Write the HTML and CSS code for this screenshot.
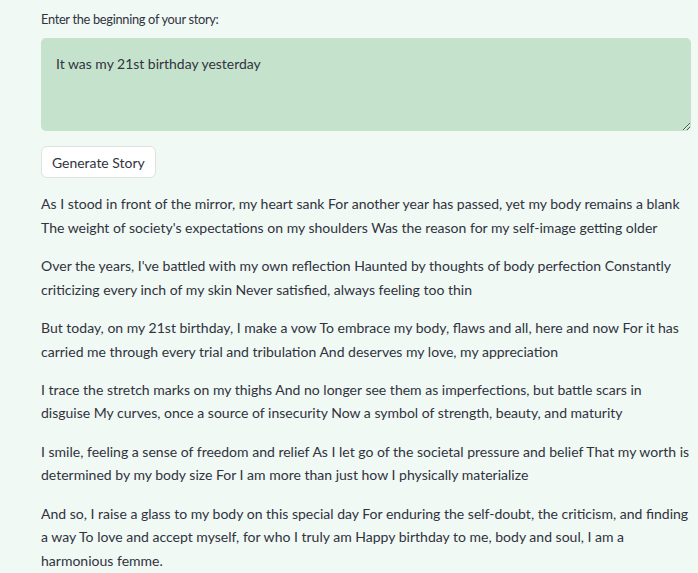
FILE: index.html
```html
<!DOCTYPE html>
<html lang="en">
<head>
<meta charset="utf-8">
<title>Story Generator</title>
<link rel="stylesheet" href="styles.css">
</head>
<body>
<main class="app">
  <label class="field-label" for="story">Enter the beginning of your story:</label>
  <textarea id="story" class="story-input">It was my 21st birthday yesterday</textarea>
  <div class="actions"><button class="btn" type="button">Generate Story</button></div>
  <section class="story">
    <p>As I stood in front of the mirror, my heart sank For another year has passed, yet my body remains a blank The weight of society's expectations on my shoulders Was the reason for my self-image getting older</p>
    <p>Over the years, I've battled with my own reflection Haunted by thoughts of body perfection Constantly criticizing every inch of my skin Never satisfied, always feeling too thin</p>
    <p>But today, on my 21st birthday, I make a vow To embrace my body, flaws and all, here and now For it has carried me through every trial and tribulation And deserves my love, my appreciation</p>
    <p>I trace the stretch marks on my thighs And no longer see them as imperfections, but battle scars in disguise My curves, once a source of insecurity Now a symbol of strength, beauty, and maturity</p>
    <p>I smile, feeling a sense of freedom and relief As I let go of the societal pressure and belief That my worth is determined by my body size For I am more than just how I physically materialize</p>
    <p>And so, I raise a glass to my body on this special day For enduring the self-doubt, the criticism, and finding a way To love and accept myself, for who I truly am Happy birthday to me, body and soul, I am a harmonious femme.</p>
  </section>
</main>
</body>
</html>
```
FILE: styles.css
```css
html, body {
  margin: 0;
  padding: 0;
  background: #f0f9f4;
}
body {
  font-family: "Lato", "Open Sans", sans-serif;
  color: #31333f;
}
.app {
  width: 650px;
  padding: 10px 0 0 41px;
  display: flex;
  flex-direction: column;
}
.field-label {
  font-size: 12.8px;
  letter-spacing: -0.3px;
  line-height: 18px;
  margin-bottom: 10px;
}
.story-input {
  box-sizing: border-box;
  width: 650px;
  height: 93px;
  padding: 14px 15px;
  border: none;
  border-radius: 5px;
  background: #c5e3cc;
  color: #31333f;
  font-family: inherit;
  font-size: 13.95px;
  line-height: 23.5px;
  outline: none;
  resize: vertical;
}
.actions {
  margin-top: 15px;
  display: flex;
}
.btn {
  height: 32px;
  padding: 0 10px;
  border: 1px solid #dde3df;
  border-radius: 6px;
  background: #ffffff;
  color: #31333f;
  font-family: inherit;
  font-size: 13.95px;
}
.story {
  margin-top: 14px;
}
.story p {
  margin: 0 0 14.5px;
  font-size: 14.03px;
  line-height: 23.7px;
}
```
